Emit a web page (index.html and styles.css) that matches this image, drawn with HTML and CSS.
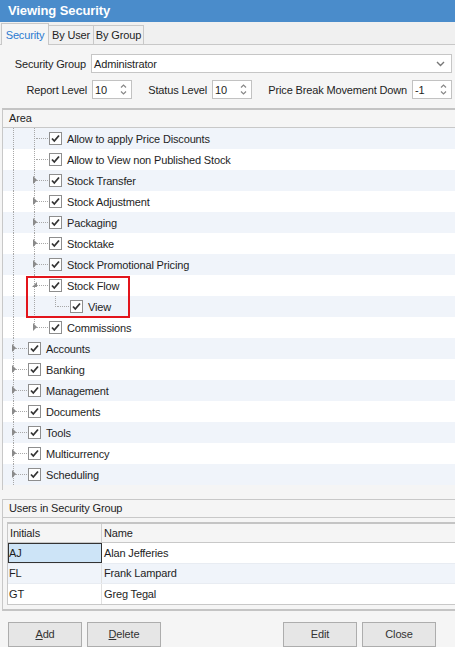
FILE: index.html
```html
<!DOCTYPE html>
<html>
  <head>
    <title>Viewing Security</title>
    <link rel="stylesheet" href="styles.css">
  </head>
  <body>
    <div class="window">
      <div class="titlebar">Viewing Security</div>
      <div class="tabs">
        <div class="tab active">Security</div>
        <div class="tab w-user">By User</div>
        <div class="tab w-group">By Group</div>
      </div>
      <div class="panel">
        <div class="form-row">
          <div class="lbl w-group-lbl">Security Group</div>
          <div class="combo">
            <span class="value">Administrator</span>
            <svg class="chev" width="9" height="6" viewBox="0 0 9 6"><path d="M1 1 L4.5 4.5 L8 1" fill="none" stroke="#777" stroke-width="1.4"/></svg>
          </div>
        </div>
        <div class="form-row second">
          <div class="lbl w-report">Report Level</div>
          <div class="spin"><span class="value">10</span><span class="arrows"><svg width="7" height="13" viewBox="0 0 7 13"><path d="M1 4.5 L3.5 2 L6 4.5 M1 8.5 L3.5 11 L6 8.5" fill="none" stroke="#888" stroke-width="1.2"/></svg></span></div>
          <div class="lbl w-status">Status Level</div>
          <div class="spin"><span class="value">10</span><span class="arrows"><svg width="7" height="13" viewBox="0 0 7 13"><path d="M1 4.5 L3.5 2 L6 4.5 M1 8.5 L3.5 11 L6 8.5" fill="none" stroke="#888" stroke-width="1.2"/></svg></span></div>
          <div class="lbl w-price">Price Break Movement Down</div>
          <div class="spin"><span class="value">-1</span><span class="arrows"><svg width="7" height="13" viewBox="0 0 7 13"><path d="M1 4.5 L3.5 2 L6 4.5 M1 8.5 L3.5 11 L6 8.5" fill="none" stroke="#888" stroke-width="1.2"/></svg></span></div>
        </div>

        <div class="area">
          <div class="group-header">Area</div>
          <div class="tree">
            <div class="node band"><span class="guide"></span><span class="conn"></span><span class="check"><svg width="11" height="11" viewBox="0 0 11 11"><path d="M2 5.5 L4.3 8 L9 2.5" fill="none" stroke="#333" stroke-width="1.8"/></svg></span><span class="text">Allow to apply Price Discounts</span></div>
            <div class="node"><span class="guide"></span><span class="conn"></span><span class="check"><svg width="11" height="11" viewBox="0 0 11 11"><path d="M2 5.5 L4.3 8 L9 2.5" fill="none" stroke="#333" stroke-width="1.8"/></svg></span><span class="text">Allow to View non Published Stock</span></div>
            <div class="node band"><span class="guide"></span><span class="conn"><i class="tri"></i></span><span class="check"><svg width="11" height="11" viewBox="0 0 11 11"><path d="M2 5.5 L4.3 8 L9 2.5" fill="none" stroke="#333" stroke-width="1.8"/></svg></span><span class="text">Stock Transfer</span></div>
            <div class="node"><span class="guide"></span><span class="conn"><i class="tri"></i></span><span class="check"><svg width="11" height="11" viewBox="0 0 11 11"><path d="M2 5.5 L4.3 8 L9 2.5" fill="none" stroke="#333" stroke-width="1.8"/></svg></span><span class="text">Stock Adjustment</span></div>
            <div class="node band"><span class="guide"></span><span class="conn"><i class="tri"></i></span><span class="check"><svg width="11" height="11" viewBox="0 0 11 11"><path d="M2 5.5 L4.3 8 L9 2.5" fill="none" stroke="#333" stroke-width="1.8"/></svg></span><span class="text">Packaging</span></div>
            <div class="node"><span class="guide"></span><span class="conn"><i class="tri"></i></span><span class="check"><svg width="11" height="11" viewBox="0 0 11 11"><path d="M2 5.5 L4.3 8 L9 2.5" fill="none" stroke="#333" stroke-width="1.8"/></svg></span><span class="text">Stocktake</span></div>
            <div class="node band"><span class="guide"></span><span class="conn"><i class="tri"></i></span><span class="check"><svg width="11" height="11" viewBox="0 0 11 11"><path d="M2 5.5 L4.3 8 L9 2.5" fill="none" stroke="#333" stroke-width="1.8"/></svg></span><span class="text">Stock Promotional Pricing</span></div>
            <div class="node"><span class="guide"></span><span class="conn"><i class="tri open"></i></span><span class="check"><svg width="11" height="11" viewBox="0 0 11 11"><path d="M2 5.5 L4.3 8 L9 2.5" fill="none" stroke="#333" stroke-width="1.8"/></svg></span><span class="text">Stock Flow</span></div>
            <div class="node band"><span class="guide"></span><span class="guide"></span><span class="conn last"></span><span class="check"><svg width="11" height="11" viewBox="0 0 11 11"><path d="M2 5.5 L4.3 8 L9 2.5" fill="none" stroke="#333" stroke-width="1.8"/></svg></span><span class="text">View</span></div>
            <div class="node"><span class="guide"></span><span class="conn last"><i class="tri"></i></span><span class="check"><svg width="11" height="11" viewBox="0 0 11 11"><path d="M2 5.5 L4.3 8 L9 2.5" fill="none" stroke="#333" stroke-width="1.8"/></svg></span><span class="text">Commissions</span></div>
            <div class="node band"><span class="conn"><i class="tri"></i></span><span class="check"><svg width="11" height="11" viewBox="0 0 11 11"><path d="M2 5.5 L4.3 8 L9 2.5" fill="none" stroke="#333" stroke-width="1.8"/></svg></span><span class="text">Accounts</span></div>
            <div class="node"><span class="conn"><i class="tri"></i></span><span class="check"><svg width="11" height="11" viewBox="0 0 11 11"><path d="M2 5.5 L4.3 8 L9 2.5" fill="none" stroke="#333" stroke-width="1.8"/></svg></span><span class="text">Banking</span></div>
            <div class="node band"><span class="conn"><i class="tri"></i></span><span class="check"><svg width="11" height="11" viewBox="0 0 11 11"><path d="M2 5.5 L4.3 8 L9 2.5" fill="none" stroke="#333" stroke-width="1.8"/></svg></span><span class="text">Management</span></div>
            <div class="node"><span class="conn"><i class="tri"></i></span><span class="check"><svg width="11" height="11" viewBox="0 0 11 11"><path d="M2 5.5 L4.3 8 L9 2.5" fill="none" stroke="#333" stroke-width="1.8"/></svg></span><span class="text">Documents</span></div>
            <div class="node band"><span class="conn"><i class="tri"></i></span><span class="check"><svg width="11" height="11" viewBox="0 0 11 11"><path d="M2 5.5 L4.3 8 L9 2.5" fill="none" stroke="#333" stroke-width="1.8"/></svg></span><span class="text">Tools</span></div>
            <div class="node"><span class="conn"><i class="tri"></i></span><span class="check"><svg width="11" height="11" viewBox="0 0 11 11"><path d="M2 5.5 L4.3 8 L9 2.5" fill="none" stroke="#333" stroke-width="1.8"/></svg></span><span class="text">Multicurrency</span></div>
            <div class="node band"><span class="conn"><i class="tri"></i></span><span class="check"><svg width="11" height="11" viewBox="0 0 11 11"><path d="M2 5.5 L4.3 8 L9 2.5" fill="none" stroke="#333" stroke-width="1.8"/></svg></span><span class="text">Scheduling</span></div>
            <div class="highlight"></div>
          </div>
        </div>

        <div class="users">
          <div class="group-header">Users in Security Group</div>
          <div class="grid">
            <div class="grid-row head"><div class="c-init">Initials</div><div class="c-name">Name</div></div>
            <div class="grid-row"><div class="c-init selected">AJ</div><div class="c-name">Alan Jefferies</div></div>
            <div class="grid-row band"><div class="c-init">FL</div><div class="c-name">Frank Lampard</div></div>
            <div class="grid-row"><div class="c-init">GT</div><div class="c-name">Greg Tegal</div></div>
          </div>
        </div>

        <div class="buttons">
          <div class="btn"><u>A</u>dd</div>
          <div class="btn"><u>D</u>elete</div>
          <div class="spacer"></div>
          <div class="btn">Edit</div>
          <div class="btn">Close</div>
        </div>
      </div>
    </div>
  </body>
</html>
```

FILE: styles.css
```css
body {
  margin: 0;
  font-family: "Liberation Sans", Arial, sans-serif;
  font-size: 11px;
  letter-spacing: -0.15px;
  color: #1e1e1e;
  background: #f5f5f5;
}

.window {
  width: 455px;
  height: 647px;
  overflow: hidden;
  background: #f5f5f5;
}

.titlebar {
  height: 22px;
  line-height: 22px;
  padding-left: 8px;
  background: #4a8ccb;
  color: #fff;
  font-weight: bold;
  font-size: 13px;
  letter-spacing: -0.1px;
}

.tabs {
  display: flex;
  align-items: flex-end;
  height: 22px;
  padding-left: 1px;
  background: #f0f0f0;
}

.tab {
  height: 18px;
  line-height: 19px;
  text-align: center;
  border-top: 1px solid #c8c8c8;
  border-right: 1px solid #c8c8c8;
  background: #f0f0f0;
  box-sizing: content-box;
}

.tab.active {
  position: relative;
  z-index: 1;
  width: 46px;
  height: 21px;
  line-height: 23px;
  margin-bottom: -1px;
  border-left: 1px solid #c8c8c8;
  background: #f5f5f5;
  color: #2a7ad0;
}

.w-user {
  width: 44px;
}

.w-group {
  width: 49px;
}

.panel {
  border-top: 1px solid #c8c8c8;
  padding-top: 9px;
}

.form-row {
  display: flex;
  align-items: center;
  height: 19px;
}

.form-row.second {
  margin-top: 7px;
}

.lbl {
  text-align: right;
  padding-right: 5px;
  box-sizing: border-box;
  white-space: nowrap;
}

.w-group-lbl {
  width: 91px;
}

.w-report {
  width: 92px;
}

.w-status {
  width: 80px;
}

.w-price {
  width: 160px;
}

.combo {
  flex: 1;
  display: flex;
  align-items: center;
  height: 19px;
  margin-right: 3px;
  border: 1px solid #c6c6c6;
  background: #fff;
  box-sizing: border-box;
}

.combo .value {
  flex: 1;
  padding-left: 2px;
}

.combo .chev {
  margin-right: 6px;
}

.spin {
  display: flex;
  align-items: center;
  width: 40px;
  height: 19px;
  border: 1px solid #c2c2c2;
  background: #fff;
  box-sizing: border-box;
}

.spin .value {
  flex: 1;
  padding-left: 2px;
}

.spin .arrows {
  display: flex;
  width: 12px;
  height: 17px;
  align-items: center;
  justify-content: center;
  margin-right: 2px;
}

.area {
  margin-top: 9px;
  margin-left: 2px;
  border-top: 2px solid #c4c4c4;
  border-left: 1px solid #c8c8c8;
  padding-bottom: 5px;
}

.group-header {
  height: 17px;
  line-height: 17px;
  padding-left: 6px;
  background: #f5f5f5;
  border-bottom: 1px solid #c8c8c8;
}

.tree {
  position: relative;
  background: #fff;
}

.node {
  display: flex;
  align-items: center;
  height: 21px;
  background: #fff;
}

.node.band {
  background: #f0f4fa;
}

.guide,
.conn {
  position: relative;
  flex: none;
  width: 21px;
  height: 21px;
}

.guide::before,
.conn::before {
  content: "";
  position: absolute;
  left: 10px;
  top: 0;
  bottom: 0;
  border-left: 1px dotted #a8a8a8;
}

.conn.last::before {
  bottom: 10px;
}

.conn::after {
  content: "";
  position: absolute;
  left: 12px;
  top: 10px;
  width: 12px;
  border-top: 1px dotted #a8a8a8;
}

.tri {
  position: absolute;
  left: 9px;
  top: 6px;
  width: 0;
  height: 0;
  border-top: 4px solid transparent;
  border-bottom: 4px solid transparent;
  border-left: 4px solid #8a8a8a;
  z-index: 1;
}

.tri.open {
  left: 8px;
  top: 7px;
  border-top: none;
  border-left: 5px solid transparent;
  border-bottom: 5px solid #8a8a8a;
}

.check {
  flex: none;
  display: flex;
  align-items: center;
  justify-content: center;
  width: 13px;
  height: 13px;
  margin-left: 4px;
  margin-right: 5px;
  border: 1px solid #8e8e8e;
  background: #fff;
  box-sizing: border-box;
}

.text {
  white-space: nowrap;
}

.highlight {
  position: absolute;
  left: 23px;
  top: 148px;
  width: 104px;
  height: 42px;
  border: 2px solid #e3141b;
  box-sizing: border-box;
}

.users {
  margin-top: 9px;
  margin-left: 2px;
  border-top: 1px solid #c8c8c8;
  border-left: 1px solid #c8c8c8;
  border-bottom: 2px solid #c4c4c4;
  padding-bottom: 4px;
}

.grid {
  margin-top: 4px;
  margin-left: 4px;
  border-top: 2px solid #c4c4c4;
  border-left: 1px solid #c8c8c8;
  border-bottom: 1px solid #c8c8c8;
  background: #fff;
}

.grid-row {
  display: flex;
  height: 20px;
  line-height: 20px;
}

.grid-row.head {
  height: 18px;
  line-height: 18px;
  background: #f5f5f5;
  border-bottom: 1px solid #c8c8c8;
}

.grid-row.band {
  background: #f0f4fa;
  border-top: 1px solid #e8ecf2;
  border-bottom: 1px solid #e8ecf2;
  height: 19px;
  line-height: 19px;
}

.c-init {
  width: 94px;
  padding-left: 1px;
  border-right: 1px solid #e0e0e0;
  box-sizing: border-box;
}

.head .c-init {
  padding-left: 2px;
  border-right-color: #d0d0d0;
}

.c-name {
  flex: 1;
  padding-left: 2px;
}

.c-init.selected {
  background: #cde4f7;
  border: 1px solid #333;
  line-height: 18px;
  padding-left: 0;
}

.buttons {
  display: flex;
  margin-top: 11px;
  padding: 0 19px 0 8px;
  gap: 6px;
}

.spacer {
  flex: 1;
}

.btn {
  width: 74px;
  height: 25px;
  line-height: 23px;
  text-align: center;
  border: 1px solid #adadad;
  background: #e6e6e6;
  color: #333;
  box-sizing: border-box;
}

.btn + .btn {
  margin-left: -1px;
}
```
